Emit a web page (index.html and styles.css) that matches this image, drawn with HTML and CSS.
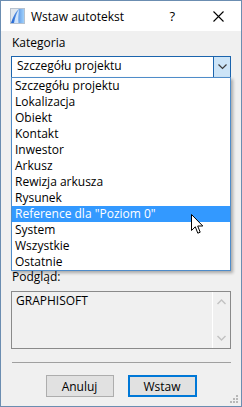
FILE: index.html
```html
<!DOCTYPE html>
<html lang="pl">
<head>
    <meta charset="UTF-8">
    <title>Wstaw autotekst</title>
    <link rel="stylesheet" href="styles.css">
</head>
<body>
    <div class="window">
        <div class="titlebar">
            <svg class="app-icon" width="15" height="16" viewBox="0 0 15 16">
                <defs>
                    <linearGradient id="sail" x1="0" y1="0" x2="1" y2="0">
                        <stop offset="0" stop-color="#1c5fd0"/>
                        <stop offset="1" stop-color="#9fd0fb"/>
                    </linearGradient>
                </defs>
                <rect x="0.5" y="0.5" width="14" height="15" fill="#dfe6ee" stroke="#b7c2cf"/>
                <path d="M1 15 C3 9 6 3 9 1 L14 1 L14 15 Z" fill="url(#sail)"/>
                <path d="M4 15 C5 9 7 4 9 1.5 C8.5 6 8 11 8.5 15 Z" fill="#e8f3ff" opacity="0.85"/>
            </svg>
            <span class="title">Wstaw autotekst</span>
            <span class="help">?</span>
            <svg class="close" width="11" height="11" viewBox="0 0 11 11">
                <path d="M0.5 0.5 L10.5 10.5 M10.5 0.5 L0.5 10.5" stroke="#000" stroke-width="1.1" fill="none"/>
            </svg>
        </div>

        <div class="content">
            <div class="label">Kategoria</div>
            <div class="combo">
                <span class="combo-value">Szczegółu projektu</span>
                <span class="combo-button">
                    <svg width="9" height="6" viewBox="0 0 9 6">
                        <path d="M0.5 0.5 L4.5 4.5 L8.5 0.5" stroke="#3b3b3b" stroke-width="1.2" fill="none"/>
                    </svg>
                </span>
            </div>

            <div class="text-list"></div>

            <div class="label label-tight">Podgląd:</div>
            <div class="preview">
                <div class="preview-text">GRAPHISOFT</div>
                <div class="scrollbar">
                    <svg width="9" height="6" viewBox="0 0 9 6">
                        <path d="M0.5 5 L4.5 1 L8.5 5" stroke="#c2c2c2" stroke-width="1.4" fill="none"/>
                    </svg>
                    <svg width="9" height="6" viewBox="0 0 9 6">
                        <path d="M0.5 1 L4.5 5 L8.5 1" stroke="#c2c2c2" stroke-width="1.4" fill="none"/>
                    </svg>
                </div>
            </div>

            <div class="separator"></div>

            <div class="buttons">
                <button class="btn">Anuluj</button>
                <button class="btn btn-default">Wstaw</button>
            </div>
        </div>

        <ul class="dropdown">
            <li>Szczegółu projektu</li>
            <li>Lokalizacja</li>
            <li>Obiekt</li>
            <li>Kontakt</li>
            <li>Inwestor</li>
            <li>Arkusz</li>
            <li>Rewizja arkusza</li>
            <li>Rysunek</li>
            <li class="selected">Reference dla "Poziom 0"</li>
            <li>System</li>
            <li>Wszystkie</li>
            <li>Ostatnie</li>
        </ul>

        <svg class="cursor" width="13" height="21" viewBox="0 0 13 21">
            <path d="M0.5 0.5 L0.5 16.5 L4.3 12.8 L6.8 19.2 L9.2 18.2 L6.7 12 L11.8 12 Z" fill="#fff" stroke="#000" stroke-width="1" stroke-linejoin="miter"/>
        </svg>

        <svg class="grip" width="9" height="9" viewBox="0 0 9 9">
            <rect x="6" y="0" width="2" height="2" fill="#b8b8b8"/>
            <rect x="3" y="3" width="2" height="2" fill="#b8b8b8"/>
            <rect x="6" y="3" width="2" height="2" fill="#b8b8b8"/>
            <rect x="0" y="6" width="2" height="2" fill="#b8b8b8"/>
            <rect x="3" y="6" width="2" height="2" fill="#b8b8b8"/>
            <rect x="6" y="6" width="2" height="2" fill="#b8b8b8"/>
        </svg>
    </div>
</body>
</html>
```

FILE: styles.css
```css
body {
    margin: 0;
    font-family: "Open Sans", "Noto Sans", sans-serif;
    font-size: 12px;
    color: #000;
}
.window {
    position: relative;
    width: 242px;
    height: 407px;
    box-sizing: border-box;
    border: 1px solid #6b8db1;
    background-color: #f0f0f0;
    overflow: hidden;
}
.titlebar {
    display: flex;
    align-items: center;
    height: 30px;
    background-color: #fff;
    padding-left: 9px;
}
.app-icon {
    margin-right: 6px;
}
.title {
    font-size: 12px;
    flex: 1;
}
.help {
    font-size: 13px;
    margin-right: 38px;
}
.close {
    margin-right: 17px;
}
.content {
    padding: 4px 10px 0 10px;
}
.label {
    line-height: 16px;
    padding-left: 1px;
}
.label-tight {
    line-height: 10px;
}
.combo {
    display: flex;
    margin-top: 5px;
    height: 22px;
    box-sizing: border-box;
    border: 1px solid #1b64ad;
    background-color: #fff;
}
.combo-value {
    flex: 1;
    line-height: 16px;
    padding-left: 5px;
    padding-top: 1px;
}
.combo-button {
    width: 16px;
    display: flex;
    align-items: center;
    justify-content: center;
    border-left: 1px solid #1b64ad;
    background-color: #cce4f7;
}
.text-list {
    height: 194px;
}
.preview {
    display: flex;
    margin-top: 9px;
    height: 58px;
    box-sizing: border-box;
    border: 1px solid #8a8a8a;
}
.preview-text {
    flex: 1;
    line-height: 14px;
    padding: 2px 0 0 4px;
}
.scrollbar {
    width: 17px;
    border-left: 1px solid #fff;
    display: flex;
    flex-direction: column;
    justify-content: space-between;
    align-items: center;
    padding: 7px 0 7px 0;
}
.separator {
    margin-top: 13px;
    height: 1px;
    margin-left: 1px;
    background-color: #a0a0a0;
}
.buttons {
    display: flex;
    justify-content: center;
    gap: 14px;
    margin-top: 12px;
}
.btn {
    width: 68px;
    height: 22px;
    box-sizing: border-box;
    border: 1px solid #adadad;
    background-color: #e1e1e1;
    font-family: inherit;
    font-size: 12px;
    color: #000;
    padding: 0;
}
.btn-default {
    width: 69px;
    border: 2px solid #0078d7;
}
.dropdown {
    position: absolute;
    top: 76px;
    left: 10px;
    width: 220px;
    margin: 0;
    padding: 0;
    list-style: none;
    box-sizing: border-box;
    border: 1px solid #4f8cc9;
    background-color: #fff;
    box-shadow: 2px 2px 3px rgba(0, 0, 0, 0.3);
}
.dropdown li {
    height: 16px;
    line-height: 16px;
    padding-left: 3px;
    white-space: nowrap;
}
.dropdown li.selected {
    background-color: #3399ff;
    color: #fff;
}
.cursor {
    position: absolute;
    left: 190px;
    top: 213px;
}
.grip {
    position: absolute;
    right: 2px;
    bottom: 2px;
}
```
